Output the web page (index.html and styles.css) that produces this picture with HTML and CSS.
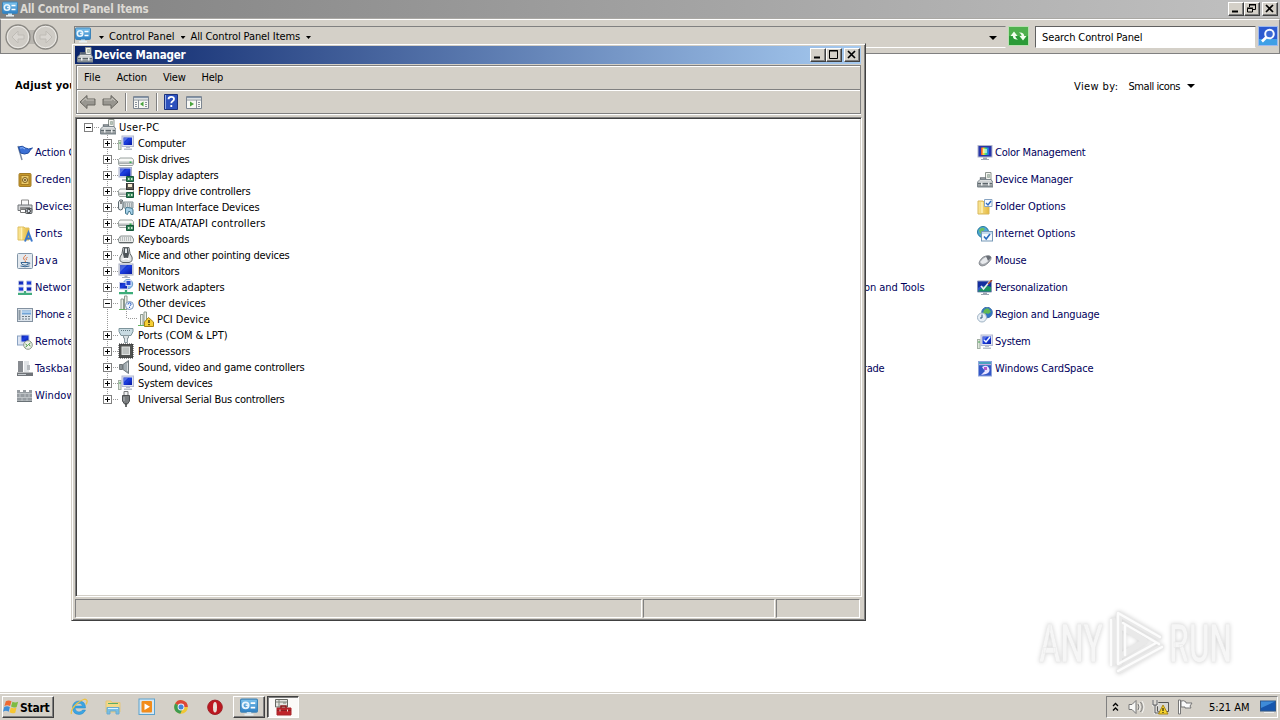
FILE: index.html
```html
<!DOCTYPE html>
<html lang="en">
<head>
<meta charset="utf-8">
<title>All Control Panel Items</title>
<link rel="stylesheet" href="styles.css">
</head>
<body>
<svg class="defs" aria-hidden="true">
  <defs>
    <linearGradient id="gBlue" x1="0" y1="0" x2="1" y2="1"><stop offset="0" stop-color="#0a1a9c"/><stop offset=".45" stop-color="#1c3fe0"/><stop offset="1" stop-color="#0618a0"/></linearGradient>
    <linearGradient id="gMetal" x1="0" y1="0" x2="0" y2="1"><stop offset="0" stop-color="#eceeee"/><stop offset="1" stop-color="#7f868a"/></linearGradient>
    <linearGradient id="gFolder" x1="0" y1="0" x2="1" y2="0"><stop offset="0" stop-color="#fbe89a"/><stop offset="1" stop-color="#e5b93f"/></linearGradient>
    <linearGradient id="gSky" x1="0" y1="0" x2="0" y2="1"><stop offset="0" stop-color="#7fc4ee"/><stop offset="1" stop-color="#2c7fc4"/></linearGradient>
    <linearGradient id="gRainbow" x1="0" y1="0" x2="1" y2="0"><stop offset="0" stop-color="#e33"/><stop offset=".3" stop-color="#fd3"/><stop offset=".6" stop-color="#3d8"/><stop offset="1" stop-color="#25f"/></linearGradient>
    <symbol id="cpl" viewBox="0 0 16 16"><rect x=".5" y="1" width="15" height="11.500" rx="1" fill="url(#gSky)" stroke="#3c83b8"/><circle cx="5" cy="6.500" r="2.700" fill="none" stroke="#e9f5fd" stroke-width="1.600"/><path d="M5 6.500h3" stroke="#e9f5fd" stroke-width="1.400"/><path d="M9.500 4.500h4M9.500 8.500h4" stroke="#fff" stroke-width="1.500"/><path d="M6 12.500h4v2H6z" fill="#cfe2ee"/><path d="M4 14.800h8" stroke="#e6eef2" stroke-width="1.500"/></symbol>
    <symbol id="devmgr" viewBox="0 0 16 16"><path d="M8.500.500h5.500v9H8.500z" fill="#f5f5f1" stroke="#8d958f"/><path d="M10.500 2.500h2v3h-2z" fill="#b6c6bb" stroke="#829087" stroke-width=".5"/><path d="M3.500 8V6h5v2" fill="none" stroke="#6d757b" stroke-width="1.300"/><path d="M1 9.500 3 7.500h11l2 3v4.500H.5V11z" fill="url(#gMetal)" stroke="#7b858b"/><path d="M1 11.500h14" stroke="#5c666b"/><path d="M4 10.500h1.500v3H4zM11 10.500h1.500v3H11z" fill="#eef1f2"/></symbol>
    <symbol id="monitor" viewBox="0 0 16 16"><rect x="1" y="1" width="14" height="11" fill="#e1e4ec" stroke="#a7adc0"/><rect x="2" y="2" width="12" height="9" fill="url(#gBlue)"/><path d="M2 2h7L2 9z" fill="#7695f5" opacity=".55"/><path d="M6.500 12.500h3V14h-3zM4 14h8v1H4z" fill="#aab2bd"/></symbol>
    <symbol id="computer" viewBox="0 0 16 16"><rect x=".5" y="5.500" width="2.500" height="9" fill="#dfe7dc" stroke="#a3b0a4"/><path d="M1 8h2" stroke="#45a555"/><rect x="4" y="1" width="11.500" height="10.500" fill="#dfe3f1" stroke="#b4bad2"/><rect x="5.500" y="2.500" width="8.500" height="7.500" fill="url(#gBlue)"/><path d="M5.500 2.500h5l-5 5z" fill="#7f9cff" opacity=".6"/><path d="M8 12h4v1H8zM6 13.500h8v1.500H6z" fill="#b9c0cc"/></symbol>
    <symbol id="drive" viewBox="0 0 16 16"><path d="M2 7h12l1.500 2v4l-1 1.500h-13l-1-1.500V9z" fill="#f4f5f2" stroke="#9ba3a0"/><path d="M1 9.500h14V13H1z" fill="url(#gMetal)" opacity=".75"/><path d="M1 9h14" stroke="#fff"/><rect x="11.500" y="10.500" width="2" height="1.500" fill="#36b34c"/></symbol>
    <symbol id="chip" viewBox="0 0 16 16"><path d="M8.500 9.500h7v5h-7z" fill="#338457" stroke="#16573a"/><path d="M10 11h1.500v2H10zM13 11h1.500v2H13z" fill="#cde6cf"/></symbol>
    <symbol id="display" viewBox="0 0 16 16"><rect x="1" y=".5" width="12.500" height="9.500" fill="#dfe3f1" stroke="#a8afc9"/><rect x="2" y="1.500" width="10.500" height="7.500" fill="url(#gBlue)"/><path d="M2 1.500h5L2 7z" fill="#7f9cff" opacity=".6"/><path d="M4 12h5v2H4z" fill="#afb6bb"/><use href="#chip"/></symbol>
    <symbol id="floppy" viewBox="0 0 16 16"><use href="#drive" y="-1"/><rect x="8.500" y="0" width="7" height="6.500" fill="#5d5a50" stroke="#333"/><rect x="10" y="1" width="4" height="3" fill="#f5ead0"/><use href="#chip"/></symbol>
    <symbol id="ide" viewBox="0 0 16 16"><use href="#drive" y="-2"/><use href="#chip" y="1"/></symbol>
    <symbol id="hid" viewBox="0 0 16 16"><path d="M6 3h9v6H6z" fill="#d6dbdc" stroke="#89959a"/><path d="M7 5h7M7 7h7" stroke="#707d83" stroke-dasharray="1 1"/><path d="M2 1q3-1 3 2v5q0 3-2.500 3T.5 8V3z" fill="#e8edf0" stroke="#59666c"/><path d="M3 2v3" stroke="#222"/><path d="M7.500 14.500V10q0-2 2-1.500l3 .5q2.500 0 2.500 2v4.500h-2l-1-3h-1.500l-1 3z" fill="#a6d0e8" stroke="#44798f"/></symbol>
    <symbol id="keyboard" viewBox="0 0 16 16"><path d="M2.500 5h11l2 3v2.500l-1 1.500h-13l-1-1.500V8z" fill="#e8eae9" stroke="#8b9393"/><path d="M2 7h12M2 9h12" stroke="#8b9394" stroke-dasharray="1 1"/><path d="M1 11.500h14" stroke="#5f6567"/></symbol>
    <symbol id="mice" viewBox="0 0 16 16"><path d="M5 .5h6l1 6 2 3.500q1 5-3 5.500H5Q1 15 2 10l2-3.500z" fill="#dfe2e2" stroke="#5e6466"/><path d="M6 1h4l1 6-1 4H6L5 7z" fill="#4e5559"/><path d="M7 1.500h2V6H7z" fill="#e7edf0"/><path d="M4.500 12.500q3.500-2 7 0" stroke="#fff" stroke-width="1.500" fill="none"/></symbol>
    <symbol id="netad" viewBox="0 0 16 16"><circle cx="10" cy="5" r="4.700" fill="#8cc1ef" stroke="#6b9bc8"/><rect x="1.500" y="3.500" width="8" height="6.500" fill="url(#gBlue)" stroke="#c8cfe8"/><rect x="8" y="1.500" width="5" height="5" fill="#284ad0" stroke="#d5dcf5"/><path d="M1 14.200h14M8 11v3" stroke="#3dad79" stroke-width="2.300"/></symbol>
    <symbol id="other" viewBox="0 0 16 16"><path d="M3 14.500V4h2.500v10.500zM6.500 14.500V1H9v13.500z" fill="#edf0ea" stroke="#8d998e"/><path d="M1 14.500h6" stroke="#62b55c"/><circle cx="11.500" cy="10.500" r="4" fill="#f1f6ff" stroke="#7d97b8"/><path d="M10 9.500q0-1.700 1.600-1.700T13 9.500q0 .8-1.400 1.500M11.500 12v1" stroke="#235ac0" fill="none"/></symbol>
    <symbol id="pci" viewBox="0 0 16 16"><path d="M2.500 14.500V3.500H5v11zM6 14.500V1h2.500v13.500z" fill="#edf0ea" stroke="#8d998e"/><path d="M0 14.500h7" stroke="#62b55c"/><path d="M10.500 6.500 15.500 11v4.500h-9V11z" fill="#f5cf35" stroke="#a88212"/><path d="M11 9v3M11 13v1.200" stroke="#2a2000" stroke-width="1.300"/></symbol>
    <symbol id="ports" viewBox="0 0 16 16"><path d="M1 1.500h14v3l-2 4H3l-2-4z" fill="#c9dbe2" stroke="#7d949b"/><path d="M3 3.500h10" stroke="#61777d" stroke-dasharray="1 1"/><path d="M5.500 8.500h5V11h-1v4.500h-3V11h-1z" fill="#dce2e4" stroke="#8a989d"/></symbol>
    <symbol id="cpu" viewBox="0 0 16 16"><path d="M1 1h14v14H1z" fill="#494b4a" stroke="#262726" stroke-dasharray="1 1"/><rect x="1.500" y="1.500" width="13" height="13" fill="#505250"/><rect x="4" y="4" width="7.500" height="7.500" fill="#bdc1bf" stroke="#e1e3e2"/></symbol>
    <symbol id="sound" viewBox="0 0 16 16"><path d="M1.500 5.500h3v5h-3z" fill="#8b9397" stroke="#707679"/><path d="M5 5.500 10.500 1.500v13L5 10.500z" fill="#a3adb2" stroke="#6f797e"/><path d="M9.500 4v8" stroke="#d5dadd"/></symbol>
    <symbol id="usb" viewBox="0 0 16 16"><path d="M6 .500h4V5H6z" fill="#f0f0f0" stroke="#77797b"/><path d="M4.500 4.500h7V10L9.500 13h-3l-2-3z" fill="#797c7e" stroke="#4c4f51"/><path d="M8 12.500V16" stroke="#393c3e" stroke-width="1.500"/><path d="M6 6v4" stroke="#b6bbbe"/></symbol>

    <symbol id="flag" viewBox="0 0 16 16"><path d="M1 1 5 15" stroke="#7887a0" stroke-width="1.400"/><path d="M1.500 2q4-2 7 1 3 2 7 0-3 2-4 5-4 2-8 0z" fill="#3c70d4" stroke="#204da2"/><path d="M3 3q3-1 5 1" stroke="#90baff" fill="none"/></symbol>
    <symbol id="cred" viewBox="0 0 16 16"><rect x="2" y="1.500" width="12" height="13" rx="1" fill="#c69729" stroke="#a37c27"/><rect x="4" y="3.500" width="8" height="9" fill="#e9c867" stroke="#a57d25"/><circle cx="8" cy="8" r="2.500" fill="#f0dc99" stroke="#7c5b1b"/><circle cx="8" cy="8" r=".9" fill="#553a08"/></symbol>
    <symbol id="printer" viewBox="0 0 16 16"><path d="M4.500 6V1h7v5" fill="#fafafa" stroke="#888"/><path d="M1 6h14v5.500H1z" fill="#d2d4d6" stroke="#707478"/><path d="M3 9h10" stroke="#444"/><path d="M3.500 10.500h6v3h-6z" fill="#fff" stroke="#777"/><rect x="8.500" y="9.500" width="6.500" height="5" rx="1" fill="#b4b9bd" stroke="#54595d"/><circle cx="11.700" cy="12" r="1.700" fill="#e4eef8" stroke="#333"/></symbol>
    <symbol id="fonts" viewBox="0 0 16 16"><path d="M1 1h6l1 1h4v12H1z" fill="url(#gFolder)" stroke="#dfbf60"/><path d="M4.500 1.500v12" stroke="#fff1b8" stroke-width="1.500"/><path d="m8 15.500 3.500-9 3.500 9M9.300 12.500h4.400" stroke="#3b78cb" stroke-width="2" fill="none"/></symbol>
    <symbol id="java" viewBox="0 0 16 16"><rect x=".5" y=".5" width="15" height="15" rx="1" fill="#e3e9ef" stroke="#8296a8"/><path d="M9 2Q5 5 7.500 7q2 1 .5 2M10.500 4Q8 5.500 9.500 7" stroke="#dd7541" fill="none"/><path d="M4 9.500h7v2q-3 1.500-6 0zM11 10q3-1 1 1.500M3.500 13q4.500 1.500 9 0" stroke="#376692" fill="none"/></symbol>
    <symbol id="netcenter" viewBox="0 0 16 16"><g fill="url(#gBlue)" stroke="#bac3e3"><path d="M1.500 1h5v4h-5zM9.500 1h5v4h-5zM1.500 7h5v4h-5zM9.500 7h5v4h-5z"/></g><path d="M1 13.800h14M8 11v3" stroke="#43ad7f" stroke-width="2.200"/></symbol>
    <symbol id="phone" viewBox="0 0 16 16"><rect x=".5" y="1.500" width="15" height="13" fill="#dce4ec" stroke="#8391a0"/><path d="M1.500 3h2v10h-2z" fill="#8e9aa4"/><path d="M5 3.500h9v4H5z" fill="#71a4d7"/><path d="M5 9.500h9M5 12h9" stroke="#6b7983" stroke-dasharray="2 1"/><path d="M5 5h9" stroke="#e9f5ff"/></symbol>
    <symbol id="remote" viewBox="0 0 16 16"><rect x=".5" y="2" width="11" height="9" fill="#dde5f3" stroke="#89a2c2"/><rect x="4" y="1" width="8" height="7" fill="url(#gBlue)" stroke="#c5cfe6"/><circle cx="11" cy="11" r="4.300" fill="#edf1e9" stroke="#8d978b"/><path d="m8.500 10 2 1.500-2 1.500M13.500 9l-2 1.500 2 1.500" stroke="#419438" fill="none"/></symbol>
    <symbol id="taskbar" viewBox="0 0 16 16"><path d="M1 0h5v11H1z" fill="#878b90"/><path d="M7 0h5v11H7z" fill="#e0e3e6"/><path d="M0 11.500h16V15H0z" fill="#707479"/><path d="M1 13.500h8" stroke="#c7cdd1"/><path d="M10 4h3v5h-3z" fill="#b6babe"/></symbol>
    <symbol id="firewall" viewBox="0 0 16 16"><path d="M0 2h3v2h3V2h3v2h3V2h3v11H0z" fill="#969ca1"/><path d="M0 5.500h15M0 9.500h15M3 6v3M8 6v3M12 6v3M5 10v3M10 10v3M0 13h15" stroke="#d0d4d6" stroke-width=".7"/><path d="M0 13.500h15" stroke="#697176"/></symbol>
    <symbol id="color" viewBox="0 0 16 16"><rect x="1" y=".5" width="14" height="11.500" fill="#2837aa" stroke="#b3b8cc"/><rect x="4" y="2.500" width="8" height="7.500" fill="url(#gRainbow)"/><path d="M6 4h4v4H6z" fill="#fff" opacity=".55"/><path d="M6 12.500h4V14H6zM4 14h8v1H4z" fill="#a0a8b4"/></symbol>
    <symbol id="folderopt" viewBox="0 0 16 16"><path d="M1 2h5l1 1h5v12H1z" fill="url(#gFolder)" stroke="#d8b75b"/><path d="M5 3v11" stroke="#fff2ba" stroke-width="1.500"/><path d="M7.500.500H15v7H7.500z" fill="#f5f9ff" stroke="#88a4c2"/><path d="m9 4 2 2 3-4" stroke="#2d6ac0" stroke-width="1.400" fill="none"/></symbol>
    <symbol id="inetopt" viewBox="0 0 16 16"><circle cx="6" cy="6" r="5.500" fill="#4ea6d8" stroke="#24799c"/><path d="M2 4q3-4 6-1L5 6 3 8z" fill="#6dbf61"/><rect x="4.500" y="5.500" width="11" height="9.500" fill="#f6f9fc" stroke="#7699b8"/><path d="M5 7h10" stroke="#91bbde"/><path d="m7 10.500 2.200 2.500L13 8" fill="none" stroke="#2869bd" stroke-width="1.600"/></symbol>
    <symbol id="mouse" viewBox="0 0 16 16"><path d="M2 10Q4 4 9 3q4-1 5 1t-3 6q-3 3-6 3-3-.5-3-3z" fill="#a5a8ad" stroke="#8a8f95"/><path d="M3 9q3-4 6-5l3 3q-3 4-7 4z" fill="#e8eaed"/><path d="M9 3q4-1 5 1.500L11 8z" fill="#696e76"/></symbol>
    <symbol id="person" viewBox="0 0 16 16"><path d="M.5 1h14v11H.5z" fill="#132d9f" stroke="#8c96ba"/><path d="M1 8q6-4 13-1v4.500H1z" fill="#1a9360"/><path d="M1 8q3-3 6-2l-6 5z" fill="#3451d0"/><path d="m4 6 2.500 3L13 1" stroke="#e8ecf4" stroke-width="1.600" fill="none"/><path d="M11 4 15 0" stroke="#ad4c30" stroke-width="1.500"/><path d="M6 12.500h4V14H6zM4 14h8v1H4z" fill="#9aa4b0"/></symbol>
    <symbol id="region" viewBox="0 0 16 16"><circle cx="10" cy="5.500" r="5.300" fill="#2f75c5" stroke="#4273ac"/><path d="M7 3q3-3 5-1l2 3-3 2-2-1-1 3-2-3z" fill="#62b954"/><circle cx="5" cy="10.500" r="4.500" fill="#e8eff6" stroke="#a0b3c4"/><path d="M5 7.500v3.500H3" stroke="#30557d" fill="none"/></symbol>
    <symbol id="system" viewBox="0 0 16 16"><use href="#computer"/><path d="m7 6 2 2 4-5" stroke="#eff5ff" stroke-width="1.500" fill="none"/></symbol>
    <symbol id="card" viewBox="0 0 16 16"><rect x="1.500" y=".5" width="13" height="14.500" fill="#3457c8" stroke="#8ea4dc"/><path d="M2 1h12v3.500H2z" fill="#4aa3bd"/><path d="M2 3.500h12" stroke="#c4a4e4"/><path d="M5 6q5-3 7 1t-3 6l-5 1 4-4z" fill="#e9e4ff"/><path d="M7 6h3v3H7z" fill="#b05acb"/></symbol>
  </defs>
</svg>

<div class="desktop">
  <header class="main-title">
    <svg class="i16"><use href="#cpl"/></svg>
    <b data-w="128">All Control Panel Items</b>
    <span class="winbtns">
      <i class="wb"><svg viewBox="0 0 13 11"><path d="M3 8.500h6" stroke="#000" stroke-width="2"/></svg></i>
      <i class="wb"><svg viewBox="0 0 13 11"><path d="M4.500 4V2h6v4.500H8M4 1.500h7" fill="none" stroke="#000"/><path d="M2.500 5.500h5V9h-5zM2 5h6" fill="none" stroke="#000"/></svg></i>
      <i class="wb gap"><svg viewBox="0 0 13 11"><path d="m3 2 7 7M10 2 3 9" stroke="#000" stroke-width="1.700"/></svg></i>
    </span>
  </header>

  <nav class="main-bar">
    <svg class="navs" viewBox="0 0 58 28"><rect x="13" y="7" width="30" height="14" fill="#b8b5af"/><g fill="#cfccc6" stroke="#8a8883" stroke-width="1.300"><circle cx="15" cy="14" r="12"/><circle cx="42.500" cy="14" r="12"/></g><g fill="none" stroke="#eeece8"><circle cx="15" cy="14" r="10.700"/><circle cx="42.500" cy="14" r="10.700"/></g><path d="m9 14 6-6v4h6v4h-6v4zM49 14l-6-6v4h-6v4h6v4z" fill="#d9d6d1" stroke="#bfbcb6"/></svg>
    <div class="address">
      <svg class="i16"><use href="#cpl"/></svg>
      <i class="dd"></i><span data-w="65">Control Panel</span>
      <i class="dd"></i><span data-w="109">All Control Panel Items</span>
      <i class="dd"></i><i class="dd big"></i>
    </div>
    <svg class="refresh" viewBox="0 0 21 20"><rect x=".5" y=".5" width="20" height="19" fill="#2b9b38" stroke="#b7e0b0"/><path d="M1 1h19v9H1z" fill="#4fb04e"/><path d="m2.500 10 3.500-4.500L9.500 10H7.300q.2 2.500 2.700 3.500-5 .5-5.200-3.500zM18.500 10 15 14.500 11.500 10h2.200q-.2-2.500-2.700-3.500 5-.5 5.200 3.500z" fill="#f4fff0"/></svg>
    <div class="search"><span data-w="100">Search Control Panel</span></div>
    <svg class="go" viewBox="0 0 20 20"><rect x=".5" y=".5" width="19" height="19" fill="#2c5ad0" stroke="#9db9ee"/><path d="M1 13h18v6H1z" fill="#3fa0e6"/><circle cx="11.500" cy="8" r="4.300" fill="#3a68d4" stroke="#f5f9ff" stroke-width="2"/><path d="m8.500 11-4.500 4.500" stroke="#fff" stroke-width="2.600"/></svg>
  </nav>

  <main class="content">
    <div class="heading">
      <b>Adjust your computer’s settings</b>
      <div class="viewby"><span data-w="44">View by:</span><span data-w="51">Small icons</span><i class="dd big"></i></div>
    </div>
    <div class="items">
      <ul class="first">
        <li><svg class="i16"><use href="#flag"/></svg><span data-w="66">Action Center</span></li>
        <li><svg class="i16"><use href="#cred"/></svg><span data-w="99">Credential Manager</span></li>
        <li><svg class="i16"><use href="#printer"/></svg><span data-w="101">Devices and Printers</span></li>
        <li><svg class="i16"><use href="#fonts"/></svg><span data-w="27">Fonts</span></li>
        <li><svg class="i16"><use href="#java"/></svg><span data-w="23">Java</span></li>
        <li><svg class="i16"><use href="#netcenter"/></svg><span data-w="141">Network and Sharing Center</span></li>
        <li><svg class="i16"><use href="#phone"/></svg><span data-w="88">Phone and Modem</span></li>
        <li><svg class="i16"><use href="#remote"/></svg><span data-w="190">RemoteApp and Desktop Connections</span></li>
        <li><svg class="i16"><use href="#taskbar"/></svg><span data-w="118">Taskbar and Start Menu</span></li>
        <li><svg class="i16"><use href="#firewall"/></svg><span data-w="86">Windows Firewall</span></li>
      </ul>
      <ul class="behind">
        <li class="row6"><span data-w="169">Performance Information and Tools</span></li>
        <li class="row9"><span data-w="129">Windows Anytime Upgrade</span></li>
      </ul>
      <ul>
        <li><svg class="i16"><use href="#color"/></svg><span data-w="90">Color Management</span></li>
        <li><svg class="i16"><use href="#devmgr"/></svg><span data-w="77">Device Manager</span></li>
        <li><svg class="i16"><use href="#folderopt"/></svg><span data-w="70">Folder Options</span></li>
        <li><svg class="i16"><use href="#inetopt"/></svg><span data-w="80">Internet Options</span></li>
        <li><svg class="i16"><use href="#mouse"/></svg><span data-w="31">Mouse</span></li>
        <li><svg class="i16"><use href="#person"/></svg><span data-w="72">Personalization</span></li>
        <li><svg class="i16"><use href="#region"/></svg><span data-w="104">Region and Language</span></li>
        <li><svg class="i16"><use href="#system"/></svg><span data-w="35">System</span></li>
        <li><svg class="i16"><use href="#card"/></svg><span data-w="98">Windows CardSpace</span></li>
      </ul>
    </div>
    <svg class="watermark" viewBox="0 0 210 80">
      <g class="wm-text"><text x="9" y="53" textLength="64" lengthAdjust="spacingAndGlyphs">ANY</text><text x="139" y="53" textLength="63" lengthAdjust="spacingAndGlyphs">RUN</text></g>
      <g fill="none" stroke-linejoin="round" stroke-linecap="round"><path d="M83 11v43M89 54V5l40 23M89 16v32l26-16-26-16M89 62l42-24" stroke="#e9e9e9" stroke-width="6"/><path d="M81 11v45M88 54V4l42 24M95 17v29M93 14l36 21M88 62l44-24M88 55l38-21" stroke="#fcfcfc" stroke-width="2.500"/></g>
    </svg>
  </main>

  <footer class="taskbar">
    <div class="start"><svg viewBox="0 0 18 18"><path d="M3 3q3-2 6 0L7.500 8q-3-1.500-6 0z" fill="#ee6a32"/><path d="M10 3.500q3 1.500 6 0L14.500 9q-3 1.500-6-.5z" fill="#7dbb42"/><path d="M1.300 9q3-1.500 6 0L6 14q-3-2-6 0z" fill="#3e8ed8"/><path d="M8.300 9.500q3 1.500 6 0L13 15q-3 1.500-6-.5z" fill="#f6c633"/></svg><b data-w="29">Start</b></div>
    <div class="quick">
      <svg viewBox="0 0 18 18"><path d="M15.500 10H5q.5 4 4 4 2.500 0 3.500-2h3q-2 4.500-6.500 4.500-6.500-.5-6.500-7Q3 3 9 3q6.500 0 6.500 7M5.200 8h7.300Q12 5.300 9 5.300T5.200 8" fill="#3aa5e3" fill-rule="evenodd" stroke="#2384c6" stroke-width=".5"/><path d="M1.500 16Q0 12 7 5.500 15-1 17 2.500q.5 1.500-1 4" fill="none" stroke="#edc345" stroke-width="1.300"/></svg>
      <svg viewBox="0 0 18 18"><path d="M2 3h5l1 1.500h8V14H2z" fill="#f4d985" stroke="#e3c67c"/><path d="M4 5.500h10" stroke="#5bad64"/><path d="M3 9.500h12V16h-3v-3H6v3H3z" fill="#78bee3" stroke="#6aabd1"/><path d="M4 10.500h10" stroke="#d9f3ff"/></svg>
      <svg viewBox="0 0 18 18"><rect x="1" y="1" width="15.500" height="15.500" fill="#d6e8f4" stroke="#5ba1cd"/><rect x="3.500" y="3" width="10.500" height="11.500" rx="1" fill="#f28c1c"/><path d="m6.500 5.500 5.500 3.300-5.500 3.300z" fill="#fff"/></svg>
      <svg viewBox="0 0 18 18"><circle cx="9" cy="9" r="6.800" fill="#f0c735"/><path d="M9 9H15.800A6.800 6.800 0 0 0 3.200 5.400z" fill="#dc4738"/><path d="M9 9 3.200 5.400A6.800 6.800 0 0 0 8.300 15.800L11 10z" fill="#3e9b50"/><circle cx="9" cy="9" r="3.400" fill="#edf3fc"/><circle cx="9" cy="9" r="2.500" fill="#4285d8"/></svg>
      <svg viewBox="0 0 18 18"><ellipse cx="9" cy="9.300" rx="7.300" ry="7.200" fill="#bd1720" stroke="#9e2026"/><ellipse cx="9" cy="9.300" rx="2" ry="5.200" fill="#e8dfd8"/></svg>
    </div>
    <div class="task"><svg class="i16"><use href="#cpl"/></svg></div>
    <div class="task active"><svg viewBox="0 0 18 18"><path d="M1.500 1.500h12V9h-12z" fill="#e5e5e1" stroke="#656761"/><path d="M2 4h11M5 2v7M9 5h3" stroke="#7f857b"/><path d="M7 10V8h5v2" fill="none" stroke="#8a1719" stroke-width="1.500"/><path d="M3 10h14v7H3z" fill="#bf252a" stroke="#a8272b"/><path d="M3 12.500h14" stroke="#8b2024"/><path d="M6 11.500v2M13.500 11.500v2" stroke="#f3d6d0"/></svg></div>
    <div class="tray">
      <svg class="chev" viewBox="0 0 7 10"><path d="m1 4 2.500-2.500L6 4M1 8.500 3.500 6 6 8.500" fill="none" stroke="#000" stroke-width="1.300"/></svg>
      <svg class="t1" viewBox="0 0 18 16"><path d="M1 5.500h3l4-4v13l-4-4H1z" fill="#f8f8f6" stroke="#777"/><path d="M10 5q2 3 0 6M12.500 3q3.500 5 0 10" fill="none" stroke="#777"/><path d="M11 4q2.500 4 0 8M14 2q4 6 0 12" fill="none" stroke="#f4f4f2"/></svg>
      <svg class="t2" viewBox="0 0 18 16"><path d="M5.500 3.500h11v9h-11z" fill="#d6d6d2" stroke="#555"/><path d="M1 1v5h4V1M3 6v8h5" fill="none" stroke="#eee" stroke-width="2.500"/><path d="M1 1v5h4V1M3 6v8h5" fill="none" stroke="#555"/><path d="m11 6 5 9H6.500z" fill="#f5d42c" stroke="#aa8513"/><path d="M11 9v3M11 13v1" stroke="#000"/></svg>
      <svg class="t3" viewBox="0 0 18 16"><path d="M1.500 1v14h2V1z" fill="#fff" stroke="#777"/><path d="M4 2q3-1 5 1v1h6l-2 3 1 2H8V8H4z" fill="#fafafa" stroke="#777"/></svg>
      <span data-w="40">5:21 AM</span>
      <svg class="t4" viewBox="0 0 16 14"><rect x=".5" y="1" width="15" height="10" fill="#1756ad" stroke="#315888"/><path d="M1 1.500h14L1 8z" fill="#3e8bd8"/><path d="M4 12.500h10" stroke="#eee"/></svg>
    </div>
  </footer>

  <section class="dm">
    <header class="dm-title">
      <svg class="i16"><use href="#devmgr"/></svg><b data-w="91">Device Manager</b>
      <span class="winbtns">
        <i class="wb"><svg viewBox="0 0 13 11"><path d="M3 8.500h6" stroke="#000" stroke-width="2"/></svg></i>
        <i class="wb"><svg viewBox="0 0 13 11"><path d="M2.500 1.500h8v8h-8zM2 2h9" fill="none" stroke="#000"/></svg></i>
        <i class="wb gap"><svg viewBox="0 0 13 11"><path d="m3 2 7 7M10 2 3 9" stroke="#000" stroke-width="1.700"/></svg></i>
      </span>
    </header>
    <nav class="menu"><span data-w="16">File</span><span data-w="30">Action</span><span data-w="22">View</span><span data-w="21">Help</span></nav>
    <div class="tools">
      <svg class="arr" viewBox="0 0 17 16"><path d="m1 8 7-6.500V5h8v6H8v3.500z" fill="#989690" stroke="#686660"/><path d="M3 7.500 7 4v2h8" fill="none" stroke="#c5c2bb"/></svg>
      <svg class="arr" viewBox="0 0 17 16"><path d="M16 8 9 1.500V5H1v6h8v3.500z" fill="#989690" stroke="#686660"/><path d="M2 6h8V4l3 3" fill="none" stroke="#c5c2bb"/></svg>
      <i class="sep"></i>
      <svg class="i16" viewBox="0 0 16 16"><path d="M.5 2.500h15v12H.5z" fill="#f8f8f4" stroke="#7c8590"/><path d="M1 3.500h14" stroke="#8494a8" stroke-width="1.500"/><path d="M1 6h14M5.500 6v8M2 8.500h2M2 10.500h2M2 12.500h2M12 8.500h2M12 10.500h2M12 12.500h2" stroke="#8a929a"/><path d="M10.500 7.500v5L7 10z" fill="#48a43c"/></svg>
      <i class="sep"></i>
      <svg class="help" viewBox="0 0 14 16"><path d="M.5.500h13v15H.5z" fill="#2c51bd" stroke="#1b327e"/><path d="M1.500 1v14" stroke="#93abe8"/><path d="M4.500 5.200q0-2.400 2.800-2.400 2.700 0 2.700 2.200 0 1.500-1.500 2.200-1.200.7-1.200 2M7.300 11v2" stroke="#fff" stroke-width="1.800" fill="none"/></svg>
      <svg class="i16" viewBox="0 0 16 16"><path d="M.5 2.500h15v12H.5z" fill="#f8f8f4" stroke="#7c8590"/><path d="M1 3.500h14" stroke="#8494a8" stroke-width="1.500"/><path d="M1 6h14M10.500 6v8M12 8.500h2M12 10.500h2M12 12.500h2" stroke="#8a929a"/><path d="M4 7.500v5L8 10z" fill="#48a43c"/></svg>
    </div>
    <div class="tree">
      <div class="row root"><i class="ex minus"></i><i class="dots"></i><svg class="i16"><use href="#devmgr"/></svg><span data-w="40">User-PC</span></div>
      <div class="row"><i class="ex"></i><i class="dots"></i><svg class="i16"><use href="#computer"/></svg><span data-w="47">Computer</span></div>
      <div class="row"><i class="ex"></i><i class="dots"></i><svg class="i16"><use href="#drive"/></svg><span data-w="51">Disk drives</span></div>
      <div class="row"><i class="ex"></i><i class="dots"></i><svg class="i16"><use href="#display"/></svg><span data-w="80">Display adapters</span></div>
      <div class="row"><i class="ex"></i><i class="dots"></i><svg class="i16"><use href="#floppy"/></svg><span data-w="112">Floppy drive controllers</span></div>
      <div class="row"><i class="ex"></i><i class="dots"></i><svg class="i16"><use href="#hid"/></svg><span data-w="121">Human Interface Devices</span></div>
      <div class="row"><i class="ex"></i><i class="dots"></i><svg class="i16"><use href="#ide"/></svg><span data-w="127">IDE ATA/ATAPI controllers</span></div>
      <div class="row"><i class="ex"></i><i class="dots"></i><svg class="i16"><use href="#keyboard"/></svg><span data-w="51">Keyboards</span></div>
      <div class="row"><i class="ex"></i><i class="dots"></i><svg class="i16"><use href="#mice"/></svg><span data-w="151">Mice and other pointing devices</span></div>
      <div class="row"><i class="ex"></i><i class="dots"></i><svg class="i16"><use href="#monitor"/></svg><span data-w="41">Monitors</span></div>
      <div class="row"><i class="ex"></i><i class="dots"></i><svg class="i16"><use href="#netad"/></svg><span data-w="86">Network adapters</span></div>
      <div class="row"><i class="ex minus"></i><i class="dots"></i><svg class="i16"><use href="#other"/></svg><span data-w="67">Other devices</span></div>
      <div class="row leaf"><i class="elbow"></i><svg class="i16"><use href="#pci"/></svg><span data-w="52">PCI Device</span></div>
      <div class="row"><i class="ex"></i><i class="dots"></i><svg class="i16"><use href="#ports"/></svg><span data-w="89">Ports (COM &amp; LPT)</span></div>
      <div class="row"><i class="ex"></i><i class="dots"></i><svg class="i16"><use href="#cpu"/></svg><span data-w="52">Processors</span></div>
      <div class="row"><i class="ex"></i><i class="dots"></i><svg class="i16"><use href="#sound"/></svg><span data-w="166">Sound, video and game controllers</span></div>
      <div class="row"><i class="ex"></i><i class="dots"></i><svg class="i16"><use href="#computer"/></svg><span data-w="74">System devices</span></div>
      <div class="row last"><i class="ex"></i><i class="dots"></i><svg class="i16"><use href="#usb"/></svg><span data-w="146">Universal Serial Bus controllers</span></div>
    </div>
    <div class="status"><i></i><i></i><i></i></div>
  </section>
</div>
<script src="labels.js"></script>
</body>
</html>
```

FILE: styles.css
```css
* { box-sizing: border-box; }
body { margin: 0; font: 11px/14px "DejaVu Sans Condensed", "DejaVu Sans", sans-serif; font-stretch: condensed; color: #000; }
svg { display: block; flex: none; }
i { display: block; flex: none; }
.defs { position: absolute; width: 0; height: 0; }
.i16 { width: 16px; height: 16px; }
[data-w] { white-space: nowrap; flex: none; }
.desktop { position: relative; width: 1280px; height: 720px; overflow: hidden; background: #fff; display: flex; flex-direction: column; }

.main-title { height: 19px; display: flex; align-items: center; gap: 2px; padding: 0 2px; background: linear-gradient(90deg, #808080, #c1c1c1); color: #dddad4; border-bottom: 1px solid #aaa8a4; }
.main-title b { font-size: 11.500px; }
.winbtns { margin-left: auto; display: flex; height: 14px; }
.wb { width: 16px; height: 14px; background: #d4d0c8; border: 1px solid; border-color: #fff #404040 #404040 #fff; box-shadow: inset -1px -1px #808080; }
.wb svg { width: 13px; height: 11px; }
.wb.gap { margin-left: 2px; }

.main-bar { height: 35px; flex: none; display: flex; background: #d4d0c8; border: 1px solid; border-color: #fff #808080 #808080 #808080; padding: 6px 1px 0 2px; }
.navs { width: 58px; height: 28px; margin-top: -3px; }
.address { margin-left: 13px; width: 932px; height: 22px; border: 1px solid; border-color: #808080 #d4d0c8 #fff #808080; display: flex; align-items: flex-start; padding: 2px 0 0; }
.address span { padding-top: 1px; }
.dd { width: 5px; height: 3px; background: #000; clip-path: polygon(0 0, 100% 0, 50% 100%); margin: 7px 5px 0 6px; }
.address .i16 { margin: -2px 2px 0 0; }
.dd.big { width: 8px; height: 4px; margin: 7px 8px 0 auto; }
.refresh { width: 21px; height: 20px; margin-left: 2px; }
.search { margin-left: 6px; width: 221px; height: 22px; background: #fff; border: 1px solid; border-color: #606060 #d4d0c8 #fff #606060; padding: 4px 0 0 6px; }
.go { width: 20px; height: 20px; margin-left: 2px; }

.content { flex: 1; position: relative; padding-top: 24px; }
.heading { display: flex; justify-content: space-between; padding-left: 15px; height: 61px; }
.heading b { font-size: 11px; letter-spacing: .2px; padding-top: 1px; width: 57px; overflow: hidden; white-space: nowrap; }
.viewby { display: flex; width: 206px; padding-top: 2px; }
.viewby span + span { margin-left: 10px; }
.viewby .dd.big { margin: 4px 0 0 7px; }
.items { display: grid; grid-template-columns: 720px 240px 260px; padding-left: 17px; }
.items ul { list-style: none; margin: 0; padding: 0; color: #00005c; }
.items .first { width: 55px; overflow: hidden; }
.items li { height: 27px; display: flex; align-items: center; gap: 2px; }
.items li span { padding-top: 1px; }
.behind { display: grid; grid-template-rows: repeat(10, 27px); align-content: start; }
.items .behind li { padding-left: 18px; }
.row6 { grid-row: 6; }
.row9 { grid-row: 9; }
.watermark { position: absolute; left: 1030px; top: 555px; width: 210px; height: 80px; overflow: visible; filter: drop-shadow(0 0 2px #d2d2d2); }
.wm-text { font: 500 53px Roboto, "Liberation Sans", sans-serif; fill: #f6f6f6; stroke: #e8e8e8; stroke-width: .5px; }

.taskbar { height: 27px; flex: none; display: flex; align-items: flex-start; background: #d4d0c8; border-top: 1px solid #fff; box-shadow: 0 -1px #d4d0c8; padding: 2px 2px 0; }
.start { width: 52px; height: 22px; display: flex; align-items: center; border: 1px solid; border-color: #fff #404040 #404040 #fff; box-shadow: inset -1px -1px #808080; }
.start svg { width: 17px; height: 18px; }
.start b { font-size: 12px; padding-top: 1px; }
.quick { display: flex; gap: 16px; margin-left: 16px; padding-top: 2px; }
.quick svg { width: 18px; height: 18px; }
.task { width: 32px; height: 22px; margin-left: 9px; display: flex; align-items: center; justify-content: center; border: 1px solid; border-color: #fff #404040 #404040 #fff; box-shadow: inset -1px -1px #808080; }
.task svg { width: 18px; height: 18px; }
.task.active { margin-left: 2px; background: #fbfaf8; border-color: #404040 #fff #fff #404040; box-shadow: inset 1px 1px #808080; }
.tray { margin-left: auto; width: 172px; height: 22px; display: flex; align-items: center; border: 1px solid; border-color: #808080 #fff #fff #808080; padding-left: 5px; }
.chev { width: 7px; height: 10px; }
.t1 { width: 18px; height: 16px; margin-left: 9px; }
.t2 { width: 18px; height: 16px; margin-left: 6px; }
.t3 { width: 18px; height: 16px; margin-left: 7px; }
.tray span { margin-left: 14px; padding-top: 1px; }
.t4 { width: 16px; height: 14px; margin-left: 10px; }

.dm { position: absolute; left: 71px; top: 43px; width: 795px; height: 578px; background: #d4d0c8; border: 1px solid; border-color: #d4d0c8 #404040 #404040 #d4d0c8; box-shadow: inset 1px 1px #fff, inset -1px -1px #808080; padding: 2px 2px 2px 3px; display: flex; flex-direction: column; }
.dm-title { height: 18px; flex: none; margin: 0 2px 0 0; display: flex; align-items: center; gap: 1px; padding: 0 1px 0 2px; background: linear-gradient(90deg, #0a246a, #a6caf0); color: #fff; }
.dm-title b { font-size: 11.500px; }
.menu { height: 25px; flex: none; margin: 1px 2px 0 1px; display: flex; align-items: center; padding: 1px 0 0 7px; border: 1px solid #808080; box-shadow: inset 1px 1px #fff; }
.menu span + span { margin-left: 16px; }
.tools { height: 24px; flex: none; margin: 0 2px 0 1px; display: flex; align-items: center; padding-left: 2px; border: 1px solid #808080; border-top: 0; box-shadow: inset 1px 1px #fff, 0 1px #fff; }
.arr { width: 17px; height: 16px; margin-right: 6px; }
.sep { width: 2px; height: 18px; border-left: 1px solid #808080; border-right: 1px solid #fff; margin: 0 6px 0 0; }
.tools .i16 + .sep { margin-left: 7px; }
.help { width: 14px; height: 16px; margin-right: 8px; }
.tree { margin: 3px 1px 0 0; height: 480px; flex: none; background: #fff; border: 1px solid; border-color: #808080 #fff #fff #808080; box-shadow: inset 1px 1px #404040, inset -1px -1px #d4d0c8; padding: 1px 0 0 1px; }
.row { height: 16px; display: flex; align-items: center; padding-left: 26px; background: repeating-linear-gradient(#999 0 1px, #fff 1px 2px) 30px 0 / 1px 16px no-repeat; }
.row.root { padding-left: 7px; background: none; }
.row.last { background-size: 1px 8px; }
.row.leaf { padding-left: 49px; }
.row span { margin-left: 4px; padding-top: 2px; }
.row.root span, .row.leaf span { margin-left: 3px; }
.ex { width: 9px; height: 9px; border: 1px solid #808080; background: linear-gradient(#000, #000) 1px 3px / 5px 1px no-repeat, linear-gradient(#000, #000) 3px 1px / 1px 5px no-repeat, #fff; }
.ex.minus { background: linear-gradient(#000, #000) 1px 3px / 5px 1px no-repeat, #fff; }
.dots { width: 6px; height: 1px; background: repeating-linear-gradient(90deg, #fff 0 1px, #999 1px 2px); }
.root .dots { width: 7px; }
.elbow { width: 12px; height: 8px; margin: -8px 0 0; background: repeating-linear-gradient(#999 0 1px, #fff 1px 2px) 0 0 / 1px 8px no-repeat, repeating-linear-gradient(90deg, #999 0 1px, #fff 1px 2px) 0 7px / 12px 1px no-repeat; }
.status { margin: 2px 3px 0 0; display: grid; grid-template-columns: 567px 132px 84px; gap: 1px; height: 19px; }
.status i { border: 1px solid; border-color: #808080 #fff #fff #808080; }
```

FILE: labels.js
```js
// Gives every label its nominal width by adjusting the tracking.
document.querySelectorAll('[data-w]').forEach(function (el) {
  var width = el.getBoundingClientRect().width;
  var extra = (Number(el.dataset.w) + 0.5 - width) / el.textContent.length;
  el.style.letterSpacing = extra.toFixed(3) + 'px';
});
```
